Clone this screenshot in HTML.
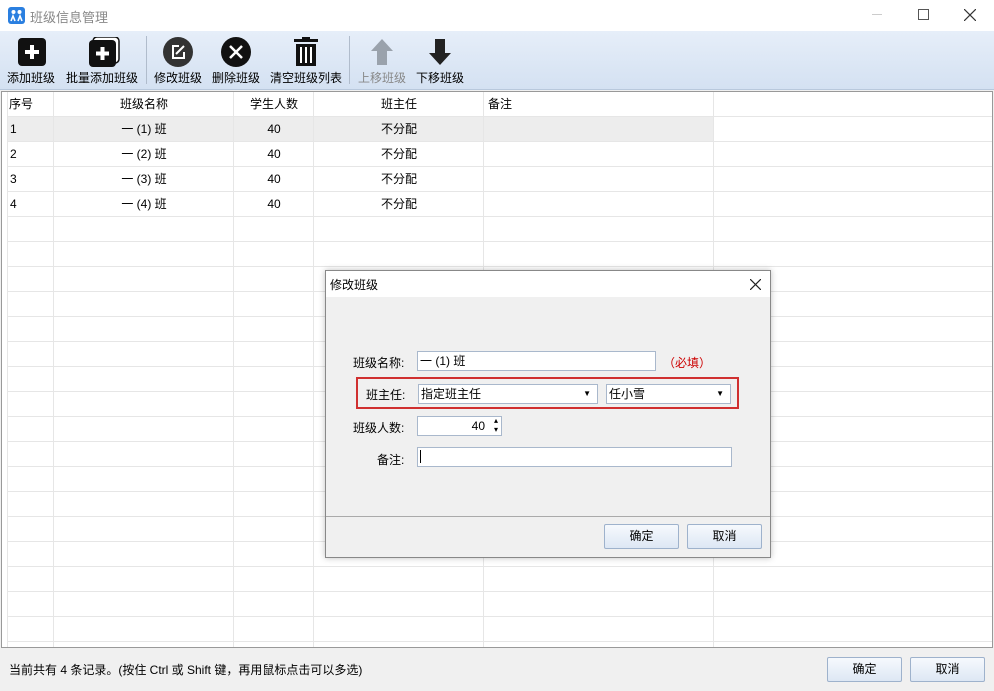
<!DOCTYPE html>
<html><head><meta charset="utf-8"><style>
*{margin:0;padding:0;box-sizing:border-box}
body{width:994px;height:691px;position:relative;overflow:hidden;background:#f0f0f0;font-family:"Liberation Sans","Noto Sans CJK SC",sans-serif;font-size:12px;color:#000}
.a{position:absolute}
.tb{left:0;top:31px;width:994px;height:59px;background:linear-gradient(#e6eef9,#d4e1f2);border-bottom:1px solid #b8c8dc}
.btn{position:absolute;top:37px;text-align:center;font-size:12px;white-space:nowrap}
.btn svg{display:block;margin:0 auto 2px}
.sep{position:absolute;top:36px;width:1px;height:48px;background:#b0bccc}
.grid{left:1px;top:91px;width:992px;height:557px;background:#fff;border:1px solid #999;overflow:hidden}
.hl{position:absolute;left:6px;width:986px;height:1px;background:#e6e6e6}
.vl{position:absolute;top:0;width:1px;height:557px;background:#e6e6e6}
.c{position:absolute;height:25px;line-height:25px;font-size:12px}
.dlg{left:325px;top:270px;width:446px;height:288px;background:#f0f0f0;border:1px solid #888;box-shadow:0 0 6px rgba(0,0,0,.25)}
.inp{position:absolute;background:#fff;border:1px solid #a9b8cc;height:20px;line-height:18px;padding-left:2px}
.pb{position:absolute;border:1px solid #9eb2cc;background:linear-gradient(#f6f9fd,#dde7f4);text-align:center;border-radius:2px}
</style></head><body>
<div class="a" style="left:0;top:0;width:994px;height:31px;background:#fff"></div>
<svg class="a" style="left:8px;top:7px" width="17" height="17"><rect width="17" height="17" rx="3" fill="#2a7fe0"/><circle cx="5.5" cy="5" r="2" fill="#fff"/><circle cx="11.5" cy="5" r="2" fill="#fff"/><path d="M3 14l2-5 2 5M10 14l2-5 2 5" stroke="#fff" stroke-width="1.6" fill="none"/></svg>
<div class="a" style="left:30px;top:7px;font-size:13px;color:#888">班级信息管理</div>
<div class="a" style="left:872px;top:14px;width:10px;height:1px;background:#ccc"></div>
<div class="a" style="left:918px;top:9px;width:11px;height:11px;border:1px solid #555"></div>
<svg class="a" style="left:964px;top:9px" width="12" height="12"><path d="M0 0l12 12M12 0L0 12" stroke="#333" stroke-width="1.2"/></svg>
<div class="a tb"></div>
<div class="btn" style="left:7px"><svg width="32" height="30"><rect x="3" y="1" width="28" height="28" rx="4" fill="#111"/><path d="M17 8v14M10 15h14" stroke="#fff" stroke-width="4"/></svg>添加班级</div>
<div class="btn" style="left:66px"><svg width="36" height="30"><rect x="9" y="0" width="26" height="26" rx="4" fill="#fff" stroke="#111" stroke-width="1.5"/><rect x="5" y="3" width="27" height="27" rx="4" fill="#111"/><path d="M18.5 10v13M12 16.5h13" stroke="#fff" stroke-width="4"/></svg>批量添加班级</div>
<div class="sep" style="left:146px"></div>
<div class="btn" style="left:154px"><svg width="32" height="30"><circle cx="16" cy="15" r="15" fill="#333"/><path d="M17 9h-6v12h11v-6M14 17l8-8" stroke="#fff" stroke-width="2" fill="none"/></svg>修改班级</div>
<div class="btn" style="left:212px"><svg width="32" height="30"><circle cx="16" cy="15" r="15" fill="#111"/><path d="M10 9l12 12M22 9l-12 12" stroke="#fff" stroke-width="2.5"/></svg>删除班级</div>
<div class="btn" style="left:270px"><svg width="32" height="30"><rect x="4" y="2" width="24" height="3" fill="#111"/><rect x="12" y="0" width="8" height="3" fill="#111"/><path d="M6 7h20v22H6z" fill="#111"/><path d="M11 10v16M16 10v16M21 10v16" stroke="#fff" stroke-width="2"/></svg>清空班级列表</div>
<div class="sep" style="left:349px"></div>
<div class="btn" style="left:358px;color:#888"><svg width="32" height="30"><path d="M16 2l11 12h-6v14h-10V14H5z" fill="#9aa2ac"/></svg>上移班级</div>
<div class="btn" style="left:416px"><svg width="32" height="30"><path d="M16 28l11-12h-6V2h-10v14H5z" fill="#222"/></svg>下移班级</div>
<div class="a grid">
<div class="a" style="left:6px;top:25px;width:706px;height:25px;background:#ededed"></div>
<div class="hl" style="top:24px"></div><div class="hl" style="top:49px"></div><div class="hl" style="top:74px"></div><div class="hl" style="top:99px"></div><div class="hl" style="top:124px"></div><div class="hl" style="top:149px"></div><div class="hl" style="top:174px"></div><div class="hl" style="top:199px"></div><div class="hl" style="top:224px"></div><div class="hl" style="top:249px"></div><div class="hl" style="top:274px"></div><div class="hl" style="top:299px"></div><div class="hl" style="top:324px"></div><div class="hl" style="top:349px"></div><div class="hl" style="top:374px"></div><div class="hl" style="top:399px"></div><div class="hl" style="top:424px"></div><div class="hl" style="top:449px"></div><div class="hl" style="top:474px"></div><div class="hl" style="top:499px"></div><div class="hl" style="top:524px"></div><div class="hl" style="top:549px"></div>
<div class="vl" style="left:5px"></div><div class="vl" style="left:51px"></div><div class="vl" style="left:231px"></div><div class="vl" style="left:311px"></div><div class="vl" style="left:481px"></div><div class="vl" style="left:711px"></div>
<div class="c" style="left:7px;top:0">序号</div><div class="c" style="left:52px;width:180px;text-align:center;top:0">班级名称</div><div class="c" style="left:232px;width:80px;text-align:center;top:0">学生人数</div><div class="c" style="left:312px;width:170px;text-align:center;top:0">班主任</div><div class="c" style="left:486px;top:0">备注</div>
<div class="c" style="left:8px;top:25px">1</div><div class="c" style="left:52px;width:180px;text-align:center;top:25px">一 (1) 班</div><div class="c" style="left:232px;width:80px;text-align:center;top:25px">40</div><div class="c" style="left:312px;width:170px;text-align:center;top:25px">不分配</div>
<div class="c" style="left:8px;top:50px">2</div><div class="c" style="left:52px;width:180px;text-align:center;top:50px">一 (2) 班</div><div class="c" style="left:232px;width:80px;text-align:center;top:50px">40</div><div class="c" style="left:312px;width:170px;text-align:center;top:50px">不分配</div>
<div class="c" style="left:8px;top:75px">3</div><div class="c" style="left:52px;width:180px;text-align:center;top:75px">一 (3) 班</div><div class="c" style="left:232px;width:80px;text-align:center;top:75px">40</div><div class="c" style="left:312px;width:170px;text-align:center;top:75px">不分配</div>
<div class="c" style="left:8px;top:100px">4</div><div class="c" style="left:52px;width:180px;text-align:center;top:100px">一 (4) 班</div><div class="c" style="left:232px;width:80px;text-align:center;top:100px">40</div><div class="c" style="left:312px;width:170px;text-align:center;top:100px">不分配</div>
</div>
<div class="a" style="left:9px;top:661px">当前共有 4 条记录。(按住 Ctrl 或 Shift 键，再用鼠标点击可以多选)</div>
<div class="pb" style="left:827px;top:657px;width:75px;height:25px;line-height:23px">确定</div>
<div class="pb" style="left:910px;top:657px;width:75px;height:25px;line-height:23px">取消</div>
<div class="a dlg">
<div class="a" style="left:0;top:0;width:444px;height:26px;background:#fff"></div>
<div class="a" style="left:4px;top:5px">修改班级</div>
<svg class="a" style="left:424px;top:8px" width="11" height="11"><path d="M0 0l11 11M11 0L0 11" stroke="#222" stroke-width="1.2"/></svg>
<div class="a" style="left:27px;top:83px">班级名称:</div>
<div class="inp" style="left:91px;top:80px;width:239px">一 (1) 班</div>
<div class="a" style="left:337px;top:83px;color:#c00">（必填）</div>
<div class="a" style="left:30px;top:106px;width:383px;height:32px;border:2px solid #d03030"></div>
<div class="a" style="left:40px;top:115px">班主任:</div>
<div class="inp" style="left:92px;top:113px;width:180px">指定班主任<span class="a" style="right:6px;top:0;font-size:8px">▼</span></div>
<div class="inp" style="left:280px;top:113px;width:125px">任小雪<span class="a" style="right:6px;top:0;font-size:8px">▼</span></div>
<div class="a" style="left:27px;top:148px">班级人数:</div>
<div class="inp" style="left:91px;top:145px;width:85px;text-align:right;padding-right:16px">40<span class="a" style="right:3px;top:-1px;font-size:8px;line-height:9px">▴<br>▾</span></div>
<div class="a" style="left:51px;top:180px">备注:</div>
<div class="inp" style="left:91px;top:176px;width:315px"><span style="display:inline-block;width:1px;height:13px;background:#000;margin-top:2px"></span></div>
<div class="a" style="left:0;top:245px;width:444px;height:1px;background:#aaa"></div>
<div class="pb" style="left:278px;top:253px;width:75px;height:25px;line-height:23px">确定</div>
<div class="pb" style="left:361px;top:253px;width:75px;height:25px;line-height:23px">取消</div>
</div>
</body></html>
